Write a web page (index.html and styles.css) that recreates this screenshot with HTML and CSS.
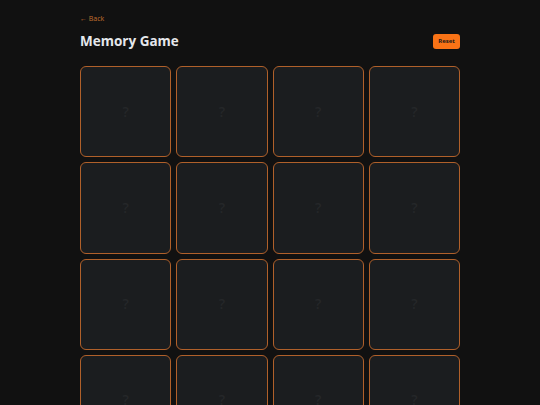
FILE: index.html
```html
<!DOCTYPE html>
<html>
<head>
<meta charset="utf-8">
<link rel="stylesheet" href="styles.css">
</head>
<body>
<div class="page">
  <a class="back" href="#">← Back</a>
  <div class="header">
    <h1 class="title">Memory Game</h1>
    <button class="reset">Reset</button>
  </div>
  <div class="grid">
    <div class="card">?</div><div class="card">?</div><div class="card">?</div><div class="card">?</div>
    <div class="card">?</div><div class="card">?</div><div class="card">?</div><div class="card">?</div>
    <div class="card">?</div><div class="card">?</div><div class="card">?</div><div class="card">?</div>
    <div class="card">?</div><div class="card">?</div><div class="card">?</div><div class="card">?</div>
  </div>
</div>
</body>
</html>
```
FILE: styles.css
```css
html, body {
  margin: 0;
  padding: 0;
  background: #111111;
  font-family: "Open Sans", "Liberation Sans", sans-serif;
  color: #e5e7eb;
}
.page {
  width: 380px;
  margin: 0 auto;
  padding-top: 14px;
}
.back {
  display: block;
  font-size: 7px;
  line-height: 10px;
  color: #c2702e;
  text-decoration: none;
}
.header {
  display: flex;
  justify-content: space-between;
  align-items: center;
  margin-top: 9px;
  height: 16px;
}
.title {
  margin: 0;
  font-size: 13.5px;
  font-weight: 700;
  color: #e5e7eb;
  line-height: 16px;
}
.reset {
  border: none;
  background: #f97316;
  color: #1a1a1a;
  font-family: "Open Sans", "Liberation Sans", sans-serif;
  font-size: 6px;
  font-weight: 700;
  width: 27px;
  height: 15px;
  padding: 0;
  border-radius: 3px;
}
.grid {
  display: grid;
  grid-template-columns: repeat(4, 1fr);
  gap: 5px;
  margin-top: 17px;
}
.card {
  aspect-ratio: 1 / 1;
  box-sizing: border-box;
  background: #1b1d1f;
  border: 1px solid #b0602a;
  border-radius: 6px;
  display: flex;
  align-items: center;
  justify-content: center;
  font-size: 14px;
  line-height: 14px;
  font-weight: 600;
  color: #252729;
}
```
